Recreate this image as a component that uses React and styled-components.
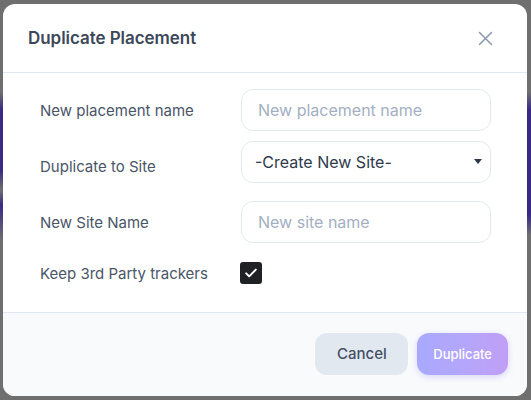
import styled, { createGlobalStyle } from "styled-components";

const GlobalStyle = createGlobalStyle`
  * { box-sizing: border-box; }
  html, body { margin: 0; height: 100%; }
  body {
    font-family: Inter, "Noto Sans", sans-serif;
    background-color: #6f6f70;
    background-image:
      linear-gradient(#6f6f70 0, #6f6f70 92px, #3a2a86 110px, #3a2a86 170px, #6f6f70 190px, #3a2a86 205px, #6f6f70 240px),
      linear-gradient(#6f6f70 0, #6f6f70 92px, #3a2a86 110px, #3a2a86 215px, #6f6f70 235px);
    background-size: 3px 100%, 4px 100%;
    background-position: left top, right top;
    background-repeat: no-repeat;
  }
`;

const Page = styled.div`
  height: 400px;
  padding: 4px 4px 4px 3px;
`;

const Modal = styled.div`
  height: 392px;
  background: #ffffff;
  border-radius: 12px;
  overflow: hidden;
  display: flex;
  flex-direction: column;
`;

const Header = styled.div`
  height: 69px;
  display: flex;
  align-items: center;
  justify-content: space-between;
  padding: 0 34px 0 25px;
  border-bottom: 1px solid #e2e8f0;
`;

const Title = styled.h2`
  margin: 0;
  font-size: 17px;
  font-weight: 600;
  color: #3c4859;
  letter-spacing: -0.05px;
`;

const CloseButton = styled.button`
  border: none;
  background: none;
  padding: 0;
  display: flex;
  color: #8d9bb0;
  cursor: pointer;
`;

const Body = styled.div`
  flex: 1;
  padding: 16px 36px 0 37px;
  display: flex;
  flex-direction: column;
  gap: 14px;
`;

const Row = styled.div`
  display: grid;
  grid-template-columns: 201px 1fr;
  align-items: center;
  min-height: ${(p) => p.$height || 42}px;
`;

const Label = styled.label`
  font-size: 15px;
  color: #4a5568;
`;

const Input = styled.input`
  height: 42px;
  width: 100%;
  border: 1px solid #e2e8f0;
  border-radius: 12px;
  padding: 0 16px;
  font-family: inherit;
  font-size: 16px;
  color: #2d3748;
  outline: none;

  &::placeholder {
    color: #a3afc2;
  }
`;

const SelectBox = styled.div`
  height: 42px;
  margin: -4px 0 4px;
  border: 1px solid #e2e8f0;
  border-radius: 12px;
  padding: 0 8px 0 13px;
  display: flex;
  align-items: center;
  justify-content: space-between;
  font-size: 16px;
  color: #2f3a4b;
`;

const Caret = styled.span`
  width: 0;
  height: 0;
  border-left: 4px solid transparent;
  border-right: 4px solid transparent;
  border-top: 5px solid #2d3748;
  margin-top: -2px;
`;

const Checkbox = styled.span`
  width: 22px;
  height: 22px;
  border-radius: 3px;
  background: #202124;
  display: flex;
  align-items: center;
  justify-content: center;
  margin-left: -1px;
`;

const Footer = styled.div`
  height: 84px;
  background: #f8fafc;
  border-top: 1px solid #e2e8f0;
  display: flex;
  align-items: center;
  justify-content: flex-end;
  gap: 9px;
  padding: 0 19px 2px 0;
`;

const Button = styled.button`
  height: 42px;
  border: none;
  border-radius: 12px;
  font-family: inherit;
  cursor: pointer;
  padding: ${(p) => (p.$primary ? "0 16px" : "0 21.5px")};
  font-size: ${(p) => (p.$primary ? "13px" : "15px")};
  font-weight: 500;
  color: ${(p) => (p.$primary ? "#ffffff" : "#435064")};
  background: ${(p) =>
    p.$primary
      ? "linear-gradient(90deg, #a8a9fe 0%, #b5a6fb 55%, #c19ef6 100%)"
      : "#e2e8f0"};
  box-shadow: ${(p) =>
    p.$primary ? "0 2px 6px rgba(160, 150, 240, 0.35)" : "none"};
`;

export default function App() {
  return (
    <Page>
      <GlobalStyle />
      <Modal>
        <Header>
          <Title>Duplicate Placement</Title>
          <CloseButton aria-label="Close">
            <svg width="15" height="15" viewBox="0 0 15 15" fill="none">
              <path
                d="M1.5 1.5l12 12M13.5 1.5l-12 12"
                stroke="currentColor"
                strokeWidth="1.6"
                strokeLinecap="round"
              />
            </svg>
          </CloseButton>
        </Header>
        <Body>
          <Row>
            <Label>New placement name</Label>
            <Input placeholder="New placement name" />
          </Row>
          <Row>
            <Label>Duplicate to Site</Label>
            <SelectBox>
              -Create New Site-
              <Caret />
            </SelectBox>
          </Row>
          <Row>
            <Label>New Site Name</Label>
            <Input placeholder="New site name" />
          </Row>
          <Row $height={32}>
            <Label>Keep 3rd Party trackers</Label>
            <Checkbox>
              <svg width="14" height="14" viewBox="0 0 14 14" fill="none">
                <path
                  d="M2.2 7.4l3 3 6.6-6.8"
                  stroke="#ffffff"
                  strokeWidth="2"
                  strokeLinecap="round"
                  strokeLinejoin="round"
                />
              </svg>
            </Checkbox>
          </Row>
        </Body>
        <Footer>
          <Button>Cancel</Button>
          <Button $primary>Duplicate</Button>
        </Footer>
      </Modal>
    </Page>
  );
}
